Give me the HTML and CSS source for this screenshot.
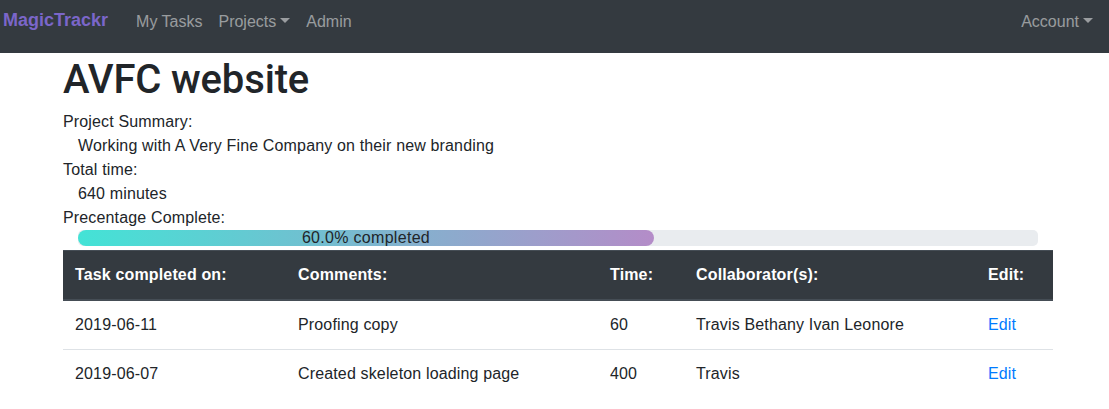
FILE: index.html
```html
<!DOCTYPE html>
<html>
<head>
<meta charset="utf-8">
<link rel="stylesheet" href="styles.css">
</head>
<body>
<nav class="navbar">
  <a class="brand" href="#">MagicTrackr</a>
  <ul class="nav">
    <li><a href="#">My Tasks</a></li>
    <li><a href="#" class="dropdown">Projects</a></li>
    <li><a href="#">Admin</a></li>
  </ul>
  <ul class="nav nav-right">
    <li><a href="#" class="dropdown">Account</a></li>
  </ul>
</nav>
<main class="container">
  <h1>AVFC website</h1>
  <div class="label">Project Summary:</div>
  <div class="value">Working with A Very Fine Company on their new branding</div>
  <div class="label">Total time:</div>
  <div class="value">640 minutes</div>
  <div class="label">Precentage Complete:</div>
  <div class="progress">
    <div class="progress-bar" style="width: 60%">60.0% completed</div>
  </div>
  <table class="table">
    <thead>
      <tr>
        <th class="c-date">Task completed on:</th>
        <th class="c-comment">Comments:</th>
        <th class="c-time">Time:</th>
        <th class="c-collab">Collaborator(s):</th>
        <th class="c-edit">Edit:</th>
      </tr>
    </thead>
    <tbody>
      <tr>
        <td>2019-06-11</td>
        <td>Proofing copy</td>
        <td>60</td>
        <td>Travis Bethany Ivan Leonore</td>
        <td><a href="#">Edit</a></td>
      </tr>
      <tr>
        <td>2019-06-07</td>
        <td>Created skeleton loading page</td>
        <td>400</td>
        <td>Travis</td>
        <td><a href="#">Edit</a></td>
      </tr>
    </tbody>
  </table>
</main>
</body>
</html>
```

FILE: styles.css
```css
* { box-sizing: border-box; }
html, body { margin: 0; padding: 0; }
body {
  font-family: "Liberation Sans", Arial, sans-serif;
  font-size: 16px;
  line-height: 24px;
  color: #212529;
  background: #fff;
}
a { text-decoration: none; }

.navbar {
  display: flex;
  align-items: center;
  height: 53px;
  background: #343a40;
  padding: 0 16px 10px 3px;
}
.brand {
  color: #7b66c9;
  font-weight: bold;
  font-size: 18px;
  line-height: 24px;
  margin-right: 20px;
  margin-top: -4px;
}
.nav {
  list-style: none;
  margin: 0;
  padding: 0;
  display: flex;
}
.nav li a {
  display: block;
  color: rgba(255,255,255,0.5);
  padding: 0 8px;
  line-height: 24px;
}
.nav-right { margin-left: auto; }
.nav-right li a { padding-right: 0; }
.dropdown::after {
  content: "";
  display: inline-block;
  margin-left: 4px;
  vertical-align: 4px;
  border-top: 5px solid;
  border-left: 5px solid transparent;
  border-right: 5px solid transparent;
}

.container {
  width: 990px;
  margin-left: 63px;
  letter-spacing: 0.15px;
}
h1 {
  font-family: Roboto, "Liberation Sans", sans-serif;
  font-size: 40px;
  line-height: 48px;
  font-weight: 500;
  letter-spacing: -0.15px;
  margin: 3px 0 6px 0;
}
.value { padding-left: 15px; }
.progress {
  margin: 0 15px 4px 15px;
  height: 16px;
  background: #e9ecef;
  border-radius: 5px;
  display: flex;
}
.progress-bar {
  height: 16px;
  border-radius: 8px;
  background: linear-gradient(to right, #43e3d6, #b48cc8);
  color: #212529;
  font-size: 16px;
  line-height: 16px;
  text-align: center;
  white-space: nowrap;
  letter-spacing: 0.3px;
}

.table {
  width: 990px;
  border-collapse: collapse;
}
.table th, .table td {
  text-align: left;
  padding: 12px;
  vertical-align: top;
}
.table thead th {
  background: #343a40;
  color: #fff;
  font-weight: bold;
  border-top: 1px solid #454d55;
  border-bottom: 2px solid #454d55;
  font-size: 16px;
}
.table tbody td { border-bottom: 1px solid #dee2e6; }
.table tbody tr:last-child td { border-bottom: none; }
.table td a { color: #007bff; }
.c-date { width: 223px; }
.c-comment { width: 312px; }
.c-time { width: 86px; }
.c-collab { width: 292px; }
```
